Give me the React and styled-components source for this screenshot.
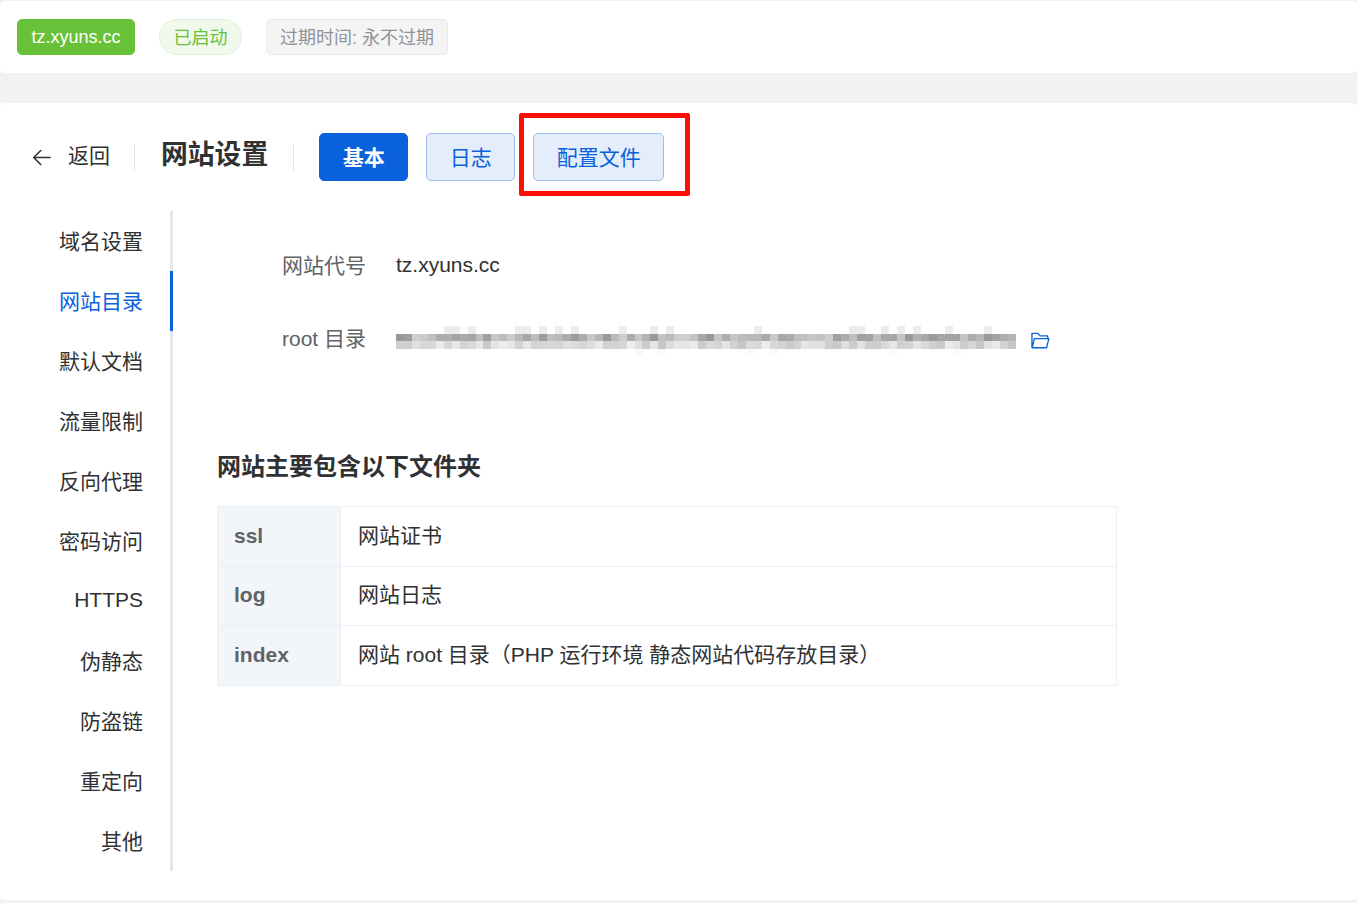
import React from "react";
import styled, {createGlobalStyle} from "styled-components";

const GlobalStyle = createGlobalStyle`
    html, body {
        margin: 0;
        padding: 0;
        background: #f2f2f3;
        font-family: "Liberation Sans", "Noto Sans CJK SC", sans-serif;
    }
`;

const Page = styled.main`
    height: 903px;
    overflow: hidden;
    padding-top: 1px;
    box-sizing: border-box;
`;

const TopBar = styled.header`
    height: 72px;
    box-sizing: border-box;
    background: #ffffff;
    border-radius: 5px;
    display: flex;
    align-items: center;
    padding: 0 17px;
    gap: 24px;
`;

const Tag = styled.span`
    height: 36px;
    box-sizing: border-box;
    display: inline-flex;
    align-items: center;
    font-size: 18px;
    padding: 0 ${(p) => p.$pad}px ${(p) => p.$lift}px;
    border-radius: ${(p) => (p.$round ? "18px" : "5px")};
    border: 1px solid ${(p) => p.$border};
    background: ${(p) => p.$bg};
    color: ${(p) => p.$color};
`;

const Card = styled.section`
    margin-top: 30px;
    height: 797px;
    box-sizing: border-box;
    background: #ffffff;
    border-radius: 5px;
    padding: 30px 0 0 27px;
`;

const HeaderRow = styled.div`
    display: flex;
    align-items: center;
    height: 48px;
`;

const BackLink = styled.div`
    display: flex;
    align-items: center;
    gap: 14px;
    font-size: 21px;
    line-height: 28px;
    padding-bottom: 2px;
    color: #303133;
`;

const BackIcon = styled.svg`
    display: block;
    margin: 2px 0 0 2px;
`;

const Divider = styled.span`
    width: 1px;
    height: 27px;
    background: #e4e7ed;
    margin: 0 ${(p) => p.$right}px 0 ${(p) => p.$left}px;
`;

const Title = styled.h1`
    margin: 0;
    font-size: 26.8px;
    line-height: 34px;
    padding-bottom: 5px;
    font-weight: 700;
    color: #303133;
`;

const Tabs = styled.div`
    display: flex;
    gap: 18px;
`;

const TabButton = styled.button`
    height: 48px;
    box-sizing: border-box;
    padding: 0 22.5px 3px;
    font-family: inherit;
    font-size: 21px;
    border-radius: 5px;
    border: 1px solid ${(p) => (p.$active ? "#0a61dc" : "#9cbce9")};
    background: ${(p) => (p.$active ? "#0a61dc" : "#e3edfb")};
    color: ${(p) => (p.$active ? "#ffffff" : "#0a61dc")};
    font-weight: ${(p) => (p.$active ? 700 : 400)};
    position: relative;
`;

const Highlight = styled.span`
    position: absolute;
    left: -15px;
    top: -21px;
    width: 171px;
    height: 83px;
    box-sizing: border-box;
    border: 5px solid #fb0f05;
    border-radius: 2px;
    pointer-events: none;
`;

const Body = styled.div`
    display: flex;
    margin-top: 30px;
    margin-left: 5px;
`;

const SideNav = styled.nav`
    width: 141px;
    height: 660px;
    box-sizing: border-box;
    border-right: 3px solid #e4e7ed;
    display: flex;
    flex-direction: column;
`;

const NavItem = styled.a`
    height: 60px;
    box-sizing: border-box;
    flex: none;
    display: flex;
    align-items: center;
    justify-content: flex-end;
    padding: 0 27px 2px 0;
    font-size: 21px;
    color: ${(p) => (p.$active ? "#0a61dc" : "#303133")};
    margin-right: -3px;
    border-right: 3px solid ${(p) => (p.$active ? "#0a61dc" : "transparent")};
`;

const Content = styled.div`
    width: 900px;
    margin-left: 44px;
`;

const Fields = styled.div`
    padding: 38px 0 0 65px;
    display: flex;
    flex-direction: column;
    gap: 40px;
`;

const Field = styled.div`
    display: flex;
    align-items: center;
    height: 32px;
`;

const FieldLabel = styled.span`
    width: 114px;
    flex: none;
    font-size: 21px;
    padding-bottom: ${(p) => p.$lift || 0}px;
    color: #606266;
`;

const FieldValue = styled.span`
    font-size: 21px;
    color: #303133;
`;

const BlurSvg = styled.svg`
    display: block;
    flex: none;
    margin-top: 8px;
    shape-rendering: crispEdges;
`;

const FolderIcon = styled.svg`
    display: block;
    margin: 6px 0 0 14px;
    color: #0a61dc;
`;

const SectionTitle = styled.h2`
    margin: 98px 0 0;
    font-size: 24px;
    line-height: 32px;
    font-weight: 700;
    color: #303133;
`;

const FolderTable = styled.table`
    width: 900px;
    margin-top: 23px;
    border-collapse: collapse;
    table-layout: fixed;
    font-size: 21px;
`;

const LabelCell = styled.th`
    width: 123px;
    height: 59.5px;
    padding: 0 0 1px 16px;
    box-sizing: border-box;
    text-align: left;
    font-weight: 700;
    color: #606266;
    background: #f2f6fa;
    border: 1px solid #ebeef5;
`;

const ValueCell = styled.td`
    padding: 0 0 5px 17px;
    color: #303133;
    border: 1px solid #ebeef5;
`;

const navItems = ["域名设置", "网站目录", "默认文档", "流量限制", "反向代理", "密码访问", "HTTPS", "伪静态", "防盗链", "重定向", "其他"];

const folders = [
    ["ssl", "网站证书"],
    ["log", "网站日志"],
    ["index", "网站 root 目录（PHP 运行环境 静态网站代码存放目录）"],
];

// mosaic over the redacted path, same cell size as the screenshot
function blurCells() {
    const cells = [];
    let seed = 71;
    const next = () => {
        seed = (seed * 1103 + 12345) % 65536;
        return seed / 65536;
    };
    for (let x = 0; x < 78; x++) {
        const top = next();
        const mid = 150 + Math.round(next() * 55);
        const low = 195 + Math.round(next() * 40);
        if (top > 0.78) cells.push({x, y: 0, c: 234});
        cells.push({x, y: 1, c: mid});
        cells.push({x, y: 2, c: low});
        if (top < 0.1) cells.push({x, y: 3, c: 248});
    }
    return cells;
}

function BlurredPath() {
    return (
        <BlurSvg width="620" height="30" viewBox="0 0 620 30">
            {blurCells().map((cell) => (
                <rect
                    key={`${cell.x}-${cell.y}`}
                    x={cell.x * 7.95}
                    y={cell.y * 7.5}
                    width="8"
                    height="7.5"
                    fill={`rgb(${cell.c}, ${cell.c + 2}, ${cell.c + 3})`}
                />
            ))}
        </BlurSvg>
    );
}

function App() {
    return (
        <Page>
            <GlobalStyle />
            <TopBar>
                <Tag $pad={13.5} $lift={0} $bg="#67c23a" $border="#67c23a" $color="#ffffff">tz.xyuns.cc</Tag>
                <Tag $round $pad={13.5} $lift={2} $bg="#f0f9eb" $border="#e1f3d8" $color="#67c23a">已启动</Tag>
                <Tag $pad={13} $lift={2} $bg="#f4f4f5" $border="#e9e9eb" $color="#909399">过期时间: 永不过期</Tag>
            </TopBar>
            <Card>
                <HeaderRow>
                    <BackLink>
                        <BackIcon width="25" height="25" viewBox="0 0 1024 1024" fill="currentColor">
                            <path d="M224 480h640a32 32 0 1 1 0 64H224a32 32 0 0 1 0-64z" />
                            <path d="m237.248 512 265.408 265.344a32 32 0 0 1-45.312 45.312l-288-288a32 32 0 0 1 0-45.312l288-288a32 32 0 1 1 45.312 45.312L237.248 512z" />
                        </BackIcon>
                        返回
                    </BackLink>
                    <Divider $left={24} $right={26} />
                    <Title>网站设置</Title>
                    <Divider $left={25} $right={25} />
                    <Tabs>
                        <TabButton $active>基本</TabButton>
                        <TabButton>日志</TabButton>
                        <TabButton>
                            配置文件
                            <Highlight />
                        </TabButton>
                    </Tabs>
                </HeaderRow>
                <Body>
                    <SideNav>
                        {navItems.map((item) => (
                            <NavItem key={item} $active={item === "网站目录"}>{item}</NavItem>
                        ))}
                    </SideNav>
                    <Content>
                        <Fields>
                            <Field>
                                <FieldLabel $lift={3}>网站代号</FieldLabel>
                                <FieldValue>tz.xyuns.cc</FieldValue>
                            </Field>
                            <Field>
                                <FieldLabel>root 目录</FieldLabel>
                                <BlurredPath />
                                <FolderIcon width="21" height="21" viewBox="0 0 1024 1024" fill="currentColor">
                                    <path d="M878.08 448H241.92l-96 384h636.16l96-384zM832 384v-64H485.76L357.504 192H128v448l57.92-231.744A32 32 0 0 1 216.96 384H832zm-24.96 512H96a32 32 0 0 1-32-32V160a32 32 0 0 1 32-32h287.872l128.384 128H864a32 32 0 0 1 32 32v96h23.04a32 32 0 0 1 31.04 39.744l-112 448A32 32 0 0 1 807.04 896z" />
                                </FolderIcon>
                            </Field>
                        </Fields>
                        <SectionTitle>网站主要包含以下文件夹</SectionTitle>
                        <FolderTable>
                            <tbody>
                                {folders.map(([name, desc]) => (
                                    <tr key={name}>
                                        <LabelCell>{name}</LabelCell>
                                        <ValueCell>{desc}</ValueCell>
                                    </tr>
                                ))}
                            </tbody>
                        </FolderTable>
                    </Content>
                </Body>
            </Card>
        </Page>
    );
}

export default App;
